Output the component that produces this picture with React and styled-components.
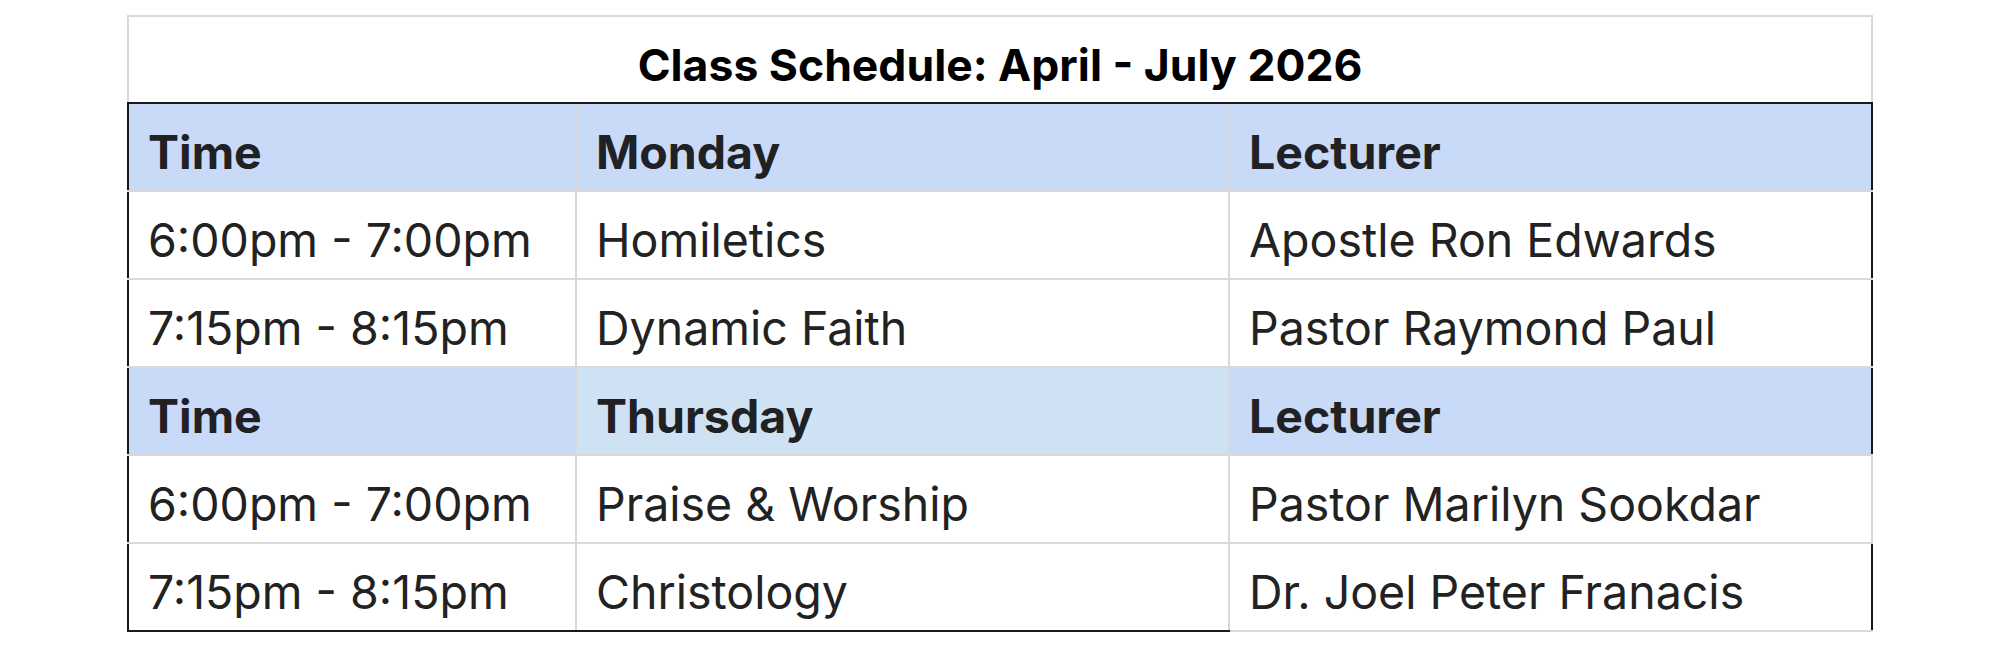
import React from 'react'
import styled, { createGlobalStyle } from 'styled-components'

const GlobalStyle = createGlobalStyle`
  html, body {
    margin: 0;
    padding: 0;
    background: #ffffff;
  }
  body {
    font-family: Inter, "Open Sans", "Liberation Sans", sans-serif;
  }
`

const DARK = '#1b1b1b'
const LIGHT = '#d9d9d9'
const HEAD_BLUE = '#c9daf8'
const HEAD_PALE = '#cfe2f3'

const Page = styled.div`
  padding: 15px 0 0 127px;
`

const Table = styled.table`
  border-collapse: collapse;
  table-layout: fixed;
  width: 1744px;
`

const Col = styled.col`
  width: ${(p) => p.$w}px;
`

const TitleCell = styled.th`
  height: 87px;
  box-sizing: border-box;
  padding: 0 0 10px;
  vertical-align: bottom;
  text-align: center;
  font-size: 44.5px;
  line-height: 1.2;
  font-weight: 700;
  color: #000;
  border: 2px solid ${LIGHT};
  border-bottom: 2px solid ${DARK};
`

const Cell = styled.td`
  height: 88px;
  box-sizing: border-box;
  padding: 0 19px 9px;
  vertical-align: bottom;
  text-align: left;
  white-space: nowrap;
  font-size: 46.5px;
  line-height: 1.2;
  font-weight: ${(p) => (p.$head ? 700 : 400)};
  color: ${(p) => (p.$head ? '#1f2124' : '#222222')};
  background: ${(p) => p.$bg || '#ffffff'};
  border: 2px solid ${LIGHT};
  border-left-color: ${(p) => (p.$left ? DARK : LIGHT)};
  border-right-color: ${(p) => (p.$right ? DARK : LIGHT)};
  border-bottom-color: ${(p) => (p.$bottom ? DARK : LIGHT)};
`

const rows = [
  { head: true, cells: ['Time', 'Monday', 'Lecturer'], right: true },
  { cells: ['6:00pm - 7:00pm', 'Homiletics', 'Apostle Ron Edwards'], right: true },
  { cells: ['7:15pm - 8:15pm', 'Dynamic Faith', 'Pastor Raymond Paul'], right: true },
  { head: true, cells: ['Time', 'Thursday', 'Lecturer'], right: true, pale: 1 },
  { cells: ['6:00pm - 7:00pm', 'Praise & Worship', 'Pastor Marilyn Sookdar'], right: false },
  { cells: ['7:15pm - 8:15pm', 'Christology', 'Dr. Joel Peter Franacis'], right: true, last: true },
]

export default function App() {
  return (
    <Page>
      <GlobalStyle />
      <Table>
        <colgroup>
          <Col $w={448} />
          <Col $w={653} />
          <Col $w={643} />
        </colgroup>
        <thead>
          <tr>
            <TitleCell colSpan={3}>Class Schedule: April - July 2026</TitleCell>
          </tr>
        </thead>
        <tbody>
          {rows.map((row, r) => (
            <tr key={r}>
              {row.cells.map((text, c) => (
                <Cell
                  key={c}
                  $head={row.head}
                  $bg={row.head ? (row.pale === c ? HEAD_PALE : HEAD_BLUE) : null}
                  $left={c === 0}
                  $right={c === 2 && row.right}
                  $bottom={row.last && c < 2}
                >
                  {text}
                </Cell>
              ))}
            </tr>
          ))}
        </tbody>
      </Table>
    </Page>
  )
}
